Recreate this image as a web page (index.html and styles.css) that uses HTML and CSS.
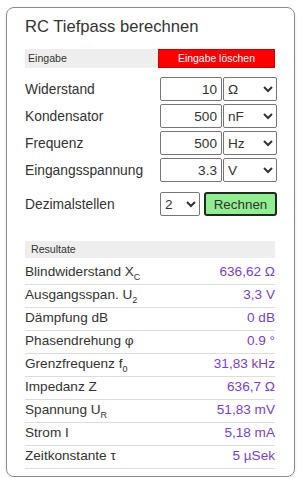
FILE: index.html
```html
<!DOCTYPE html>
<html lang="de">
<head>
    <meta charset="UTF-8">
    <meta name="viewport" content="width=device-width, initial-scale=1.0">
    <title>RC Tiefpass berechnen</title>
    <link rel="stylesheet" href="styles.css">
</head>
<body>
    <div class="card">
        <h1>RC Tiefpass berechnen</h1>

        <div class="section-head">
            <span class="section-title">Eingabe</span>
            <button class="clear-button">Eingabe löschen</button>
        </div>

        <div class="inputs">
            <label class="in-label">Widerstand</label>
            <input type="text" class="num" value="10">
            <select class="unit">
                <option>Ω</option>
                <option>kΩ</option>
                <option>MΩ</option>
            </select>

            <label class="in-label">Kondensator</label>
            <input type="text" class="num" value="500">
            <select class="unit">
                <option>nF</option>
                <option>µF</option>
                <option>pF</option>
            </select>

            <label class="in-label">Frequenz</label>
            <input type="text" class="num" value="500">
            <select class="unit">
                <option>Hz</option>
                <option>kHz</option>
                <option>MHz</option>
            </select>

            <label class="in-label">Eingangsspannung</label>
            <input type="text" class="num" value="3.3">
            <select class="unit">
                <option>V</option>
                <option>mV</option>
            </select>
        </div>

        <div class="actions">
            <label class="in-label">Dezimalstellen</label>
            <select class="decimals">
                <option>2</option>
                <option>3</option>
                <option>4</option>
            </select>
            <button class="calc-button">Rechnen</button>
        </div>

        <div class="result-head">Resultate</div>

        <ul class="results">
            <li><span>Blindwiderstand X<sub>C</sub></span><span class="val">636,62 Ω</span></li>
            <li><span>Ausgangsspan. U<sub>2</sub></span><span class="val">3,3 V</span></li>
            <li><span>Dämpfung dB</span><span class="val">0 dB</span></li>
            <li><span>Phasendrehung φ</span><span class="val">0.9 °</span></li>
            <li><span>Grenzfrequenz f<sub>0</sub></span><span class="val">31,83 kHz</span></li>
            <li><span>Impedanz Z</span><span class="val">636,7 Ω</span></li>
            <li><span>Spannung U<sub>R</sub></span><span class="val">51,83 mV</span></li>
            <li><span>Strom I</span><span class="val">5,18 mA</span></li>
            <li><span>Zeitkonstante τ</span><span class="val">5 µSek</span></li>
        </ul>
    </div>
</body>
</html>
```

FILE: styles.css
```css
body {
    font-family: Arial, "Liberation Sans", sans-serif;
    background-color: #fff;
    margin: 0;
    color: #333;
}
.card {
    box-sizing: border-box;
    width: 289px;
    margin: 7px 0 0 6px;
    padding: 8px 19px 7px 18px;
    border: 1px solid #8c8c8c;
    border-radius: 8px;
    box-shadow: 0 1px 3px rgba(0, 0, 0, 0.12);
}
h1 {
    margin: 0 0 11px;
    font-size: 16.6px;
    line-height: 22px;
    font-weight: normal;
    color: #333;
}
.section-head {
    display: flex;
    height: 19px;
    background-color: #eee;
}
.section-title {
    flex: 1;
    font-size: 10.6px;
    line-height: 19px;
    padding-left: 3px;
}
.clear-button {
    width: 117px;
    height: 19px;
    padding: 0;
    border: 1px solid #c00;
    background-color: #f00;
    color: #fff;
    font-family: inherit;
    font-size: 10.4px;
}
.inputs {
    display: grid;
    grid-template-columns: 135px 63px 54px;
    row-gap: 3px;
    align-items: center;
    margin-top: 9px;
}
.in-label {
    font-size: 13.8px;
    color: #333;
}
.num {
    box-sizing: border-box;
    width: 62px;
    height: 24px;
    padding: 0 4px;
    border: 1px solid #767676;
    border-radius: 2px;
    text-align: right;
    font-family: inherit;
    font-size: 13.6px;
    color: #333;
}
.unit, .decimals {
    box-sizing: border-box;
    height: 24px;
    border: 1px solid #767676;
    border-radius: 2px;
    background-color: #fff;
    font-family: inherit;
    font-size: 13.6px;
    color: #333;
}
.unit {
    width: 54px;
}
.actions {
    display: grid;
    grid-template-columns: 135px 44px 73px;
    align-items: center;
    margin-top: 10px;
}
.decimals {
    width: 40px;
}
.calc-button {
    box-sizing: border-box;
    width: 73px;
    height: 24px;
    padding: 0;
    border: 2px solid #1e2a1e;
    border-radius: 3px;
    background-color: #90ee90;
    font-family: inherit;
    font-size: 13.4px;
    color: #333;
}
.result-head {
    margin-top: 25px;
    height: 17px;
    line-height: 17px;
    padding-left: 6px;
    background-color: #eee;
    font-size: 10.6px;
}
.results {
    list-style: none;
    margin: 4px 0 0;
    padding: 0;
}
.results li {
    display: flex;
    justify-content: space-between;
    font-size: 13.6px;
    line-height: 20px;
    padding-bottom: 2px;
    border-bottom: 1px solid #ddd;
}
.results sub {
    font-size: 9px;
    line-height: 0;
}
.val {
    color: #7a3fc8;
}
```
